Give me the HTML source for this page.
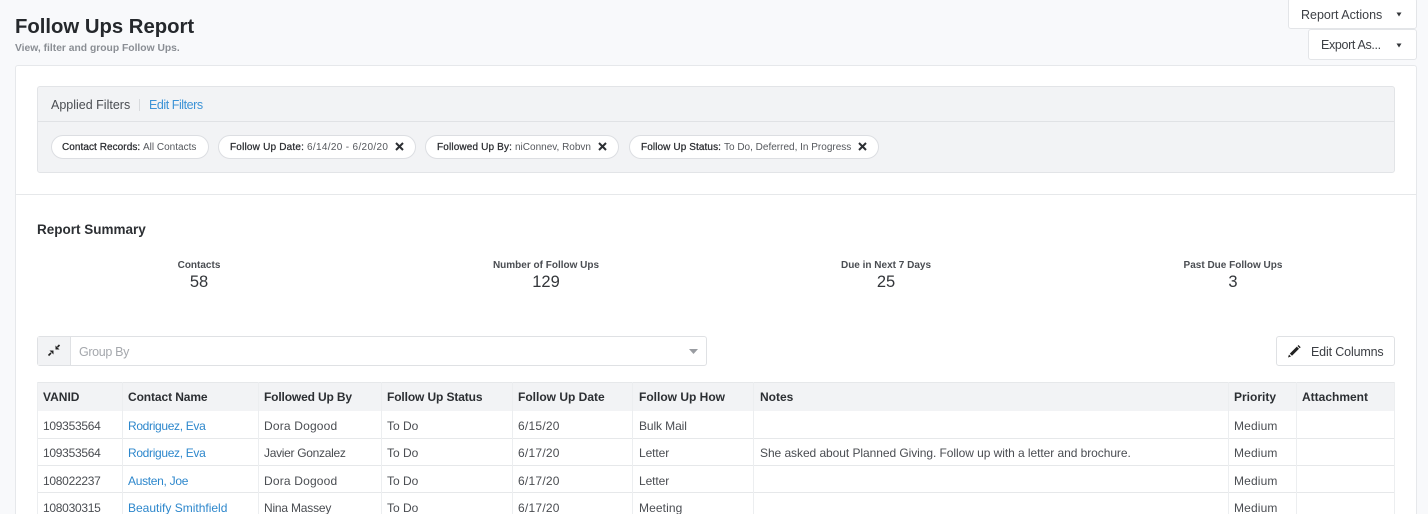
<!DOCTYPE html>
<html><head><meta charset="utf-8"><style>
html{background:#f8f9fb}
html,body{margin:0;padding:0;width:1428px;height:514px;overflow:hidden}
body{font-family:"Liberation Sans",sans-serif;color:#4a4d52;position:relative;background:#f8f9fb;filter:blur(.3px)}
.a,.t{position:absolute}
.t{white-space:nowrap;font-size:12px;line-height:16px}
.b{font-weight:bold;color:#2c2f33}
.l{color:#2d87cc}
.btn{position:absolute;background:#fff;border:1px solid #e3e5e8;border-radius:3px;box-sizing:border-box}
.chip{position:absolute;top:135px;height:24px;background:#fff;border:1px solid #dcdee2;border-radius:12px;box-sizing:border-box}
.cx{position:absolute;top:142px}
.c{position:absolute;white-space:nowrap;text-align:center;transform:translateX(-50%)}
.v{position:absolute;width:1px;background:#eceef0;top:382px;height:132px}
.h{position:absolute;left:37px;width:1358px;height:1px;background:#e6e8ea}
.cl{font-size:10px;line-height:14px;top:141px;color:#2a2c30;-webkit-text-stroke:.25px #2a2c30}
.cv{font-size:10px;line-height:14px;top:141px;color:#55585d}
.id{letter-spacing:-.28px}
.ro{letter-spacing:-.33px}
.dd{letter-spacing:.18px}
.dt{letter-spacing:.24px}
.me{letter-spacing:.15px}
</style></head><body>
<div class="t b" style="left:15px;top:14px;font-size:20.3px;line-height:26px;color:#25282c">Follow Ups Report</div>
<div class="t" style="left:15px;top:42px;font-size:10.3px;line-height:14px;font-weight:bold;color:#8a8e94">View, filter and group Follow Ups.</div>

<div class="btn" style="left:1288px;top:-2px;width:129px;height:31px"></div>
<div class="t" style="left:1301px;top:7px;font-size:12.5px;color:#3c3f44">Report Actions</div>
<svg class="a" style="left:1396px;top:12px" width="6" height="5"><path d="M0.5 0.5H5.5L3 4.5Z" fill="#33363a"/></svg>
<div class="btn" style="left:1308px;top:29px;width:109px;height:31px"></div>
<div class="t" style="left:1321px;top:37px;font-size:12.5px;letter-spacing:-.35px;color:#3c3f44">Export As...</div>
<svg class="a" style="left:1396px;top:43px" width="6" height="5"><path d="M0.5 0.5H5.5L3 4.5Z" fill="#33363a"/></svg>

<div class="a" style="left:15px;top:65px;width:1402px;height:460px;background:#fff;border:1px solid #e6e8eb;border-radius:3px;box-sizing:border-box"></div>
<div class="a" style="left:37px;top:86px;width:1358px;height:87px;background:#f2f3f5;border:1px solid #e2e4e7;border-radius:3px;box-sizing:border-box"></div>
<div class="a" style="left:38px;top:121px;width:1356px;height:1px;background:#e0e2e5"></div>
<div class="a" style="left:16px;top:194px;width:1400px;height:1px;background:#e6e8ea"></div>
<div class="t" style="left:51px;top:97px;font-size:12.5px;color:#4a4d52">Applied Filters</div>
<div class="a" style="left:139px;top:99px;width:1px;height:12px;background:#d8dadd"></div>
<div class="t l" style="left:149px;top:97px;font-size:12.5px;letter-spacing:-.45px;color:#3d93d6">Edit Filters</div>

<div class="chip" style="left:51px;width:158px"></div>
<div class="t cl" style="left:62px;letter-spacing:.06px">Contact Records:</div>
<div class="t cv" style="left:143px">All Contacts</div>
<div class="chip" style="left:218px;width:198px"></div>
<div class="t cl" style="left:230px;letter-spacing:.2px">Follow Up Date:</div>
<div class="t cv" style="left:307px;letter-spacing:.33px">6/14/20 - 6/20/20</div>
<svg class="cx" style="left:395px" width="9" height="9"><path d="M1 1L8 8M8 1L1 8" stroke="#2c2f33" stroke-width="2"/></svg>
<div class="chip" style="left:425px;width:194px"></div>
<div class="t cl" style="left:437px;letter-spacing:.15px">Followed Up By:</div>
<div class="t cv" style="left:515px">niConnev, Robvn</div>
<svg class="cx" style="left:598px" width="9" height="9"><path d="M1 1L8 8M8 1L1 8" stroke="#2c2f33" stroke-width="2"/></svg>
<div class="chip" style="left:629px;width:250px"></div>
<div class="t cl" style="left:641px;letter-spacing:.1px">Follow Up Status:</div>
<div class="t cv" style="left:724px">To Do, Deferred, In Progress</div>
<svg class="cx" style="left:858px" width="9" height="9"><path d="M1 1L8 8M8 1L1 8" stroke="#2c2f33" stroke-width="2"/></svg>

<div class="t b" style="left:37px;top:222px;font-size:13.5px">Report Summary</div>
<div class="c b" style="left:199px;top:259px;font-size:10px;line-height:14px;color:#4a4d52">Contacts</div>
<div class="c" style="left:199px;top:272px;font-size:16.5px;line-height:20px;color:#33363a">58</div>
<div class="c b" style="left:546px;top:259px;font-size:10px;line-height:14px;color:#4a4d52">Number of Follow Ups</div>
<div class="c" style="left:546px;top:272px;font-size:16.5px;line-height:20px;color:#33363a">129</div>
<div class="c b" style="left:886px;top:259px;font-size:10px;line-height:14px;color:#4a4d52">Due in Next 7 Days</div>
<div class="c" style="left:886px;top:272px;font-size:16.5px;line-height:20px;color:#33363a">25</div>
<div class="c b" style="left:1233px;top:259px;font-size:10px;line-height:14px;color:#4a4d52">Past Due Follow Ups</div>
<div class="c" style="left:1233px;top:272px;font-size:16.5px;line-height:20px;color:#33363a">3</div>

<div class="a" style="left:37px;top:336px;width:670px;height:30px;background:#fff;border:1px solid #dfe1e4;border-radius:3px;box-sizing:border-box"></div>
<div class="a" style="left:38px;top:337px;width:33px;height:28px;background:#f2f3f5;border-right:1px solid #dfe1e4;box-sizing:border-box"></div>
<svg class="a" style="left:47px;top:344px" width="14" height="13"><path d="M1.5 11.5L4 9" stroke="#222" stroke-width="1.6"/><path d="M2.5 6.5H6.5V10.5Z" fill="#222"/><path d="M12.5 1L10.5 3" stroke="#222" stroke-width="1.6"/><path d="M8.5 1.5V5.5H12.5Z" fill="#222"/></svg>
<div class="t" style="left:79px;top:344px;font-size:12.5px;letter-spacing:-.35px;color:#a5a8ad">Group By</div>
<svg class="a" style="left:689px;top:349px" width="10" height="6"><path d="M0 0H9L4.5 5Z" fill="#999ca1"/></svg>

<div class="btn" style="left:1276px;top:336px;width:119px;height:30px;border-color:#dfe1e4"></div>
<svg class="a" style="left:1288px;top:345px" width="13" height="13"><path d="M0 12.5L1 9.5L3 11.5Z" fill="#222"/><path d="M1.8 8.6L8.8 1.6L11 3.8L4 10.8Z" fill="#222"/><path d="M9.5 1L10.5 0L12.7 2.2L11.7 3.2Z" fill="#222"/></svg>
<div class="t" style="left:1311px;top:344px;font-size:12.5px;letter-spacing:-.15px;color:#3c3f44">Edit Columns</div>

<div class="a" style="left:37px;top:382px;width:1358px;height:29px;background:#f2f3f5"></div>
<div class="h" style="top:382px"></div>
<div class="h" style="top:438px"></div>
<div class="h" style="top:465px"></div>
<div class="h" style="top:492px"></div>
<div class="v" style="left:37px"></div>
<div class="v" style="left:122px"></div>
<div class="v" style="left:258px"></div>
<div class="v" style="left:381px"></div>
<div class="v" style="left:512px"></div>
<div class="v" style="left:632px"></div>
<div class="v" style="left:753px"></div>
<div class="v" style="left:1228px"></div>
<div class="v" style="left:1296px"></div>
<div class="v" style="left:1394px"></div>

<div class="t b" style="left:43px;top:389px">VANID</div>
<div class="t b" style="left:128px;top:389px;letter-spacing:-.1px">Contact Name</div>
<div class="t b" style="left:264px;top:389px;letter-spacing:-.15px">Followed Up By</div>
<div class="t b" style="left:387px;top:389px;letter-spacing:-.12px">Follow Up Status</div>
<div class="t b" style="left:518px;top:389px">Follow Up Date</div>
<div class="t b" style="left:639px;top:389px">Follow Up How</div>
<div class="t b" style="left:760px;top:389px">Notes</div>
<div class="t b" style="left:1234px;top:389px">Priority</div>
<div class="t b" style="left:1302px;top:389px">Attachment</div>

<div class="t id" style="left:43px;top:418px">109353564</div>
<div class="t l ro" style="left:128px;top:418px">Rodriguez, Eva</div>
<div class="t dd" style="left:264px;top:418px">Dora Dogood</div>
<div class="t" style="left:387px;top:418px">To Do</div>
<div class="t dt" style="left:518px;top:418px">6/15/20</div>
<div class="t" style="left:639px;top:418px;letter-spacing:-.1px">Bulk Mail</div>
<div class="t me" style="left:1234px;top:418px">Medium</div>

<div class="t id" style="left:43px;top:445px">109353564</div>
<div class="t l ro" style="left:128px;top:445px">Rodriguez, Eva</div>
<div class="t" style="left:264px;top:445px;letter-spacing:-.3px">Javier Gonzalez</div>
<div class="t" style="left:387px;top:445px">To Do</div>
<div class="t dt" style="left:518px;top:445px">6/17/20</div>
<div class="t" style="left:639px;top:445px;letter-spacing:-.1px">Letter</div>
<div class="t" style="left:760px;top:445px;letter-spacing:-.06px">She asked about Planned Giving. Follow up with a letter and brochure.</div>
<div class="t me" style="left:1234px;top:445px">Medium</div>

<div class="t id" style="left:43px;top:473px">108022237</div>
<div class="t l" style="left:128px;top:473px;letter-spacing:-.3px">Austen, Joe</div>
<div class="t dd" style="left:264px;top:473px">Dora Dogood</div>
<div class="t" style="left:387px;top:473px">To Do</div>
<div class="t dt" style="left:518px;top:473px">6/17/20</div>
<div class="t" style="left:639px;top:473px;letter-spacing:-.1px">Letter</div>
<div class="t me" style="left:1234px;top:473px">Medium</div>

<div class="t id" style="left:43px;top:500px">108030315</div>
<div class="t l" style="left:128px;top:500px">Beautify Smithfield</div>
<div class="t" style="left:264px;top:500px;letter-spacing:-.2px">Nina Massey</div>
<div class="t" style="left:387px;top:500px">To Do</div>
<div class="t dt" style="left:518px;top:500px">6/17/20</div>
<div class="t" style="left:639px;top:500px;letter-spacing:.1px">Meeting</div>
<div class="t me" style="left:1234px;top:500px">Medium</div>
</body></html>
